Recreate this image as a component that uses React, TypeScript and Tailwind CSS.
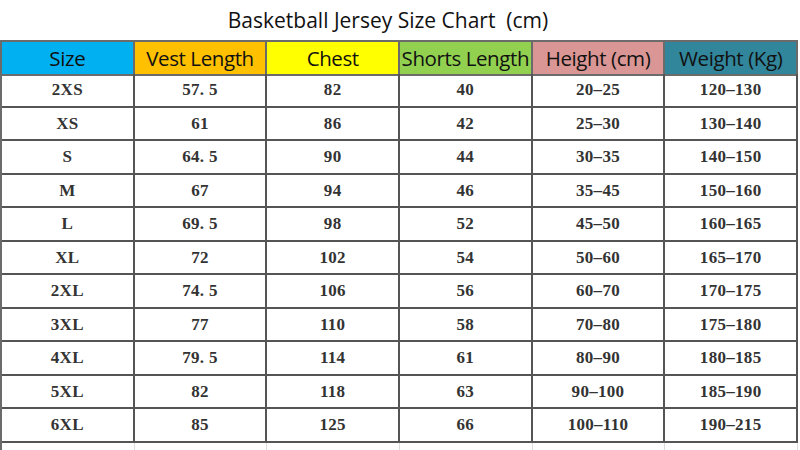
const headers = [
  { label: "Size", bg: "bg-[#00b0f0]" },
  { label: "Vest Length", bg: "bg-[#ffc000]" },
  { label: "Chest", bg: "bg-[#ffff00]" },
  { label: "Shorts Length", bg: "bg-[#92d050]" },
  { label: "Height (cm)", bg: "bg-[#da9694]" },
  { label: "Weight (Kg)", bg: "bg-[#31869b]" },
];

const rows = [
  ["2XS", "57. 5", "82", "40", "20–25", "120–130"],
  ["XS", "61", "86", "42", "25–30", "130–140"],
  ["S", "64. 5", "90", "44", "30–35", "140–150"],
  ["M", "67", "94", "46", "35–45", "150–160"],
  ["L", "69. 5", "98", "52", "45–50", "160–165"],
  ["XL", "72", "102", "54", "50–60", "165–170"],
  ["2XL", "74. 5", "106", "56", "60–70", "170–175"],
  ["3XL", "77", "110", "58", "70–80", "175–180"],
  ["4XL", "79. 5", "114", "61", "80–90", "180–185"],
  ["5XL", "82", "118", "63", "90–100", "185–190"],
  ["6XL", "85", "125", "66", "100–110", "190–215"],
];

const blank = [0, 1, 2, 3, 4, 5];

const App = () => (
  <div className="w-[800px] h-[450px] overflow-hidden bg-white">
    {/* Title */}
    <div className="h-[40px] flex items-center justify-center pr-[24px] pt-[2px] font-['Open_Sans',sans-serif] text-[21px] text-[#111] whitespace-pre">
      Basketball Jersey Size Chart  (cm)
    </div>

    {/* Table */}
    <div className="w-[798px] border-l-2 border-t-2 border-[#6b6b6b]">
      <div className="grid grid-cols-6 h-[32px]">
        {headers.map((h) => (
          <div
            key={h.label}
            className={`${h.bg} border-r-2 border-b-2 border-[#6b6b6b] flex items-center justify-center pt-[1px] font-['Open_Sans',sans-serif] text-[20.5px] text-[#111] whitespace-nowrap tracking-[-0.4px]`}
          >
            {h.label}
          </div>
        ))}
      </div>
      {rows.map((r) => (
        <div key={r[0]} className="grid grid-cols-6 h-[33.5px]">
          {r.map((v, i) => (
            <div
              key={i}
              className="border-r-2 border-b-2 border-[#555] flex items-center justify-center font-['Liberation_Serif',serif] font-bold text-[17px] tracking-[0.3px] text-[#333] whitespace-pre"
            >
              {v}
            </div>
          ))}
        </div>
      ))}
      <div className="grid grid-cols-6 h-[20px]">
        {blank.map((i) => (
          <div key={i} className="border-r border-[#ddd]" />
        ))}
      </div>
    </div>
  </div>
);

export default App;
